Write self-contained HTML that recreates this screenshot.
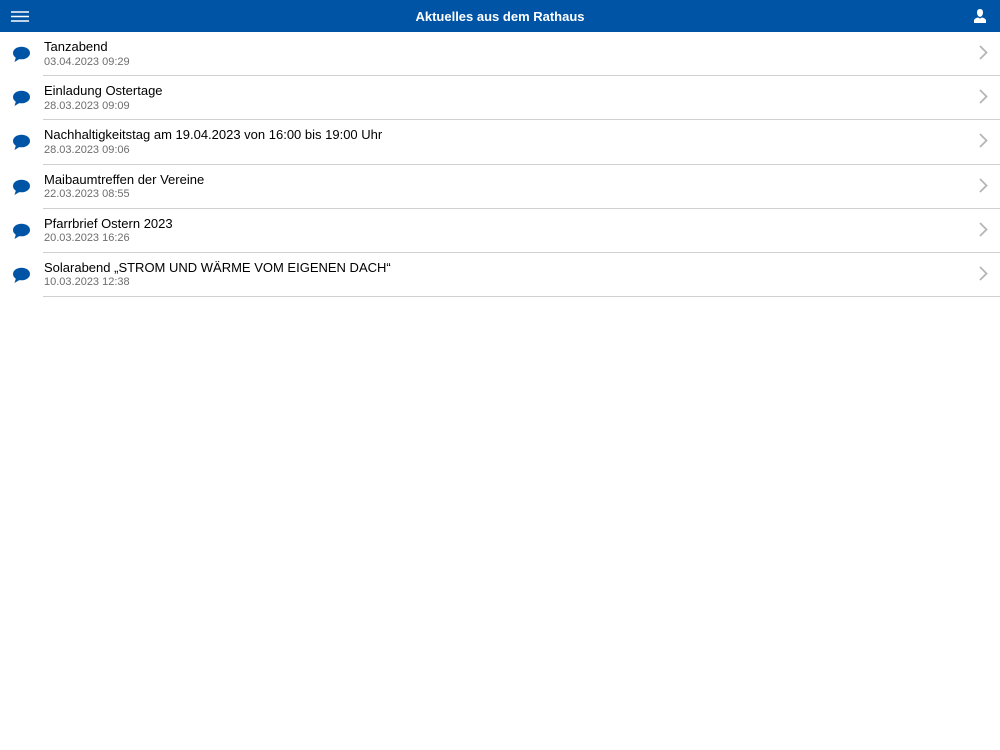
<!DOCTYPE html>
<html><head><style>
body{margin:0;width:1000px;height:750px;background:#fff;font-family:"Liberation Sans",sans-serif;overflow:hidden}
.hdr{height:32px;background:#0054a6;position:relative;color:#fff;text-align:center;font-size:13px;line-height:33px;font-weight:bold}
.row{position:relative;height:44.2px;}
.row .line{position:absolute;left:43px;right:0;bottom:0;height:1px;background:#d0d0d0}
.t{position:absolute;left:44px;top:7px;font-size:13px;color:#000}
.d{position:absolute;left:44px;top:23.5px;font-size:11px;color:#6d6d6d}
.ic{position:absolute;left:12px;top:14px}
.ch{position:absolute;right:12px;top:13px}
</style></head><body>
<div class="hdr">Aktuelles aus dem Rathaus
<svg style="position:absolute;left:11px;top:10px" width="18" height="13"><g stroke="#fff" stroke-width="1.6"><line x1="0" y1="2" x2="18" y2="2"/><line x1="0" y1="6.5" x2="18" y2="6.5"/><line x1="0" y1="11" x2="18" y2="11"/></g></svg>
<svg style="position:absolute;left:973px;top:9px" width="14" height="14"><path d="M4 3.5 Q4 0 7 0 Q10 0 10 3.5 Q10 7 7 8 Q4 7 4 3.5Z" fill="#fff"/><path d="M1 14 L1 11 Q2 9 5 8.5 L7 9.5 L9 8.5 Q12 9 13 11 L13 14Z" fill="#fff"/></svg>
</div>
<div id="list"></div>
<script>
const items=[["Tanzabend","03.04.2023 09:29"],["Einladung Ostertage","28.03.2023 09:09"],["Nachhaltigkeitstag am 19.04.2023 von 16:00 bis 19:00 Uhr","28.03.2023 09:06"],["Maibaumtreffen der Vereine","22.03.2023 08:55"],["Pfarrbrief Ostern 2023","20.03.2023 16:26"],["Solarabend „STROM UND WÄRME VOM EIGENEN DACH“","10.03.2023 12:38"]];
let h="";for(const [t,d] of items){h+=`<div class="row"><svg class="ic" width="19" height="17"><ellipse cx="9.5" cy="7" rx="8.5" ry="6.3" fill="#0054a6"/><path d="M4 11 L2.5 16 L9 12Z" fill="#0054a6"/></svg><div class="t">${t}</div><div class="d">${d}</div><svg class="ch" width="9" height="15"><path d="M1 1 L7.5 7.5 L1 14" fill="none" stroke="#b5b5b5" stroke-width="1.8"/></svg><div class="line"></div></div>`}
document.getElementById("list").innerHTML=h;
</script>
</body></html>
